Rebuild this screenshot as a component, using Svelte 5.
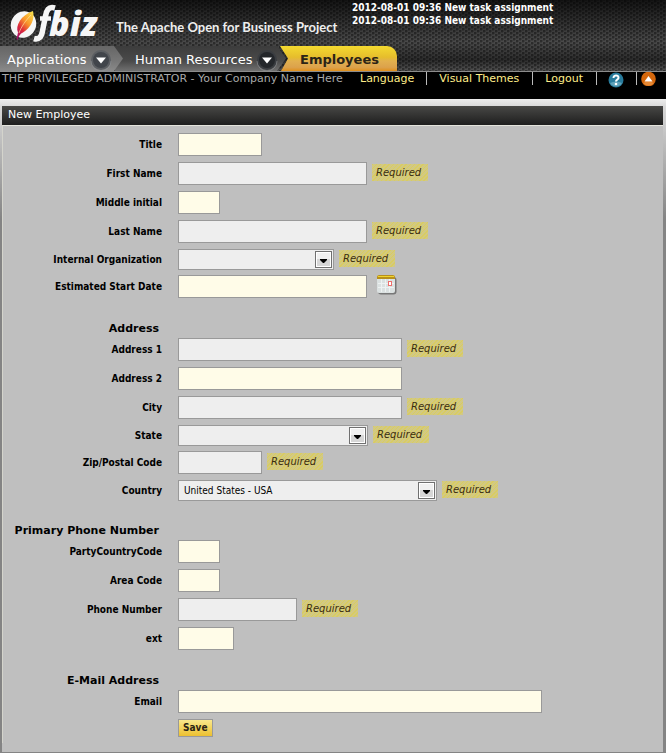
<script>
  const sections = [
    {
      title: '',
      fields: [
        { id: 'title', label: 'Title', width: 84 },
        { id: 'firstName', label: 'First Name', width: 189, required: true },
        { id: 'middleName', label: 'Middle initial', width: 42 },
        { id: 'lastName', label: 'Last Name', width: 189, required: true },
        { id: 'organization', label: 'Internal Organization', width: 156, required: true, options: [''] },
        { id: 'startDate', label: 'Estimated Start Date', width: 189, calendar: true }
      ]
    },
    {
      title: 'Address',
      fields: [
        { id: 'address1', label: 'Address 1', width: 224, required: true },
        { id: 'address2', label: 'Address 2', width: 224 },
        { id: 'city', label: 'City', width: 224, required: true },
        { id: 'state', label: 'State', width: 190, required: true, options: [''] },
        { id: 'postalCode', label: 'Zip/Postal Code', width: 84, required: true },
        { id: 'country', label: 'Country', width: 259, required: true, options: ['United States - USA'] }
      ]
    },
    {
      title: 'Primary Phone Number',
      fields: [
        { id: 'countryCode', label: 'PartyCountryCode', width: 42 },
        { id: 'areaCode', label: 'Area Code', width: 42 },
        { id: 'phone', label: 'Phone Number', width: 119, required: true },
        { id: 'ext', label: 'ext', width: 56 }
      ]
    },
    {
      title: 'E-Mail Address',
      fields: [{ id: 'email', label: 'Email', width: 364 }]
    }
  ];
  const messages = ['2012-08-01 09:36 New task assignment', '2012-08-01 09:36 New task assignment'];
</script>

{#snippet arrowDisc(rim, face)}
  <svg class="disc" width="22" height="22" viewBox="0 0 22 22" aria-hidden="true">
    <circle cx="11" cy="11" r="10" fill={rim} />
    <path d="M1 12a10 10 0 0 0 20 0" fill="none" stroke="#909397" stroke-width="1" opacity=".6" />
    <circle cx="11" cy="11" r="8" fill={face} />
    <path d="M6 8.500h10L11 14.500z" fill="#fff" />
  </svg>
{/snippet}

<div class="page">
  <header>
    <div class="masthead">
      <svg class="logo" width="94" height="43" viewBox="0 0 94 43" role="img" aria-label="Ofbiz">
        <defs>
          <linearGradient id="feather" x1="0.9" y1="0" x2="0.2" y2="1">
            <stop offset="0" stop-color="#f9e04c" />
            <stop offset=".4" stop-color="#f9962a" />
            <stop offset=".7" stop-color="#de2a3a" />
            <stop offset="1" stop-color="#a3106a" />
          </linearGradient>
        </defs>
        <ellipse cx="17.500" cy="21.500" rx="12.500" ry="13.500" transform="rotate(30 17.500 21.500)" fill="#f6f6f6" />
        <path d="M27 8C29 16 25 25 17 29.500Q13 31 11.500 37L10.500 36 12 29.500C9 23 15 12 27 8z" fill="url(#feather)" />
        <path d="M25 12C20 17 15 24 13 30" stroke="#ffe2a0" stroke-width=".7" fill="none" />
        <path d="M49 5C42 3 40.500 8 39.500 13L36.500 28C35.500 34 33 37 28 35.500" stroke="#f6f6f6" stroke-width="5.500" fill="none" />
        <path d="M34 15.500H45" stroke="#f6f6f6" stroke-width="4.500" />
        <text x="43" y="33" class="wordmark">biz</text>
      </svg>
      <span class="tagline">The Apache Open for Business Project</span>
      <div class="messages">
        {#each messages as message}
          <div>{message}</div>
        {/each}
      </div>
    </div>

    <nav class="tabs">
      <a class="tab first" href="#applications">Applications {@render arrowDisc('#5c5f63', '#41454b')}</a>
      <a class="tab second" href="#hr">Human Resources {@render arrowDisc('#3a3d41', '#24272b')}</a>
      <a class="tab current" href="#employees">Employees</a>
    </nav>

    <div class="userbar">
      <span class="who">THE PRIVILEGED ADMINISTRATOR - Your Company Name Here</span>
      <a href="#language">Language</a>
      <a href="#themes">Visual Themes</a>
      <a href="#logout">Logout</a>
      <a class="help" href="#help" aria-label="Help">
        <svg width="16" height="16" viewBox="0 0 16 16" aria-hidden="true">
          <circle cx="8" cy="8" r="7.500" fill="#287b9c" />
          <path d="M2 11a7 7 0 0 0 12 0Q8 8 2 11" fill="#77b3c8" opacity=".7" />
          <path d="M5.500 6C5.500 2.500 10.800 2.800 10.500 5.800C10.300 7.500 8 7.500 8 9.500" fill="none" stroke="#fff" stroke-width="2" />
          <circle cx="8" cy="12" r="1.300" fill="#fff" />
        </svg>
      </a>
      <a class="up" href="#top" aria-label="Collapse header">
        <svg width="15" height="14" viewBox="0 0 15 14" aria-hidden="true">
          <circle cx="7.500" cy="7" r="7.300" fill="#d4670c" />
          <path d="M2 11a7 7 0 0 0 11 0Q7.500 8 2 11" fill="#f3a254" opacity=".6" />
          <path d="M3.500 9.500 7.500 4l4 5.500z" fill="#fff" />
        </svg>
      </a>
    </div>
  </header>

  <main>
    <section class="panel">
      <h1>New Employee</h1>
      <form onsubmit={(event) => event.preventDefault()}>
        {#each sections as section}
          {#if section.title}<h2>{section.title}</h2>{/if}
          {#each section.fields as field}
            <div class="row" class:short={field.options}>
              <label for={field.id}>{field.label}</label>
              {#if field.options}
                <span class="select" style:width="{field.width}px">
                  <select id={field.id}>
                    {#each field.options as option}<option>{option}</option>{/each}
                  </select>
                  <svg width="17" height="17" viewBox="0 0 17 17" aria-hidden="true">
                    <rect x=".5" y=".5" width="16" height="16" fill="#fff" stroke="#707070" />
                    <rect x="2" y="2" width="13" height="6" fill="#f0f0f0" />
                    <rect x="2" y="8" width="13" height="7" fill="#d6d6d6" />
                    <path d="M5 8h7v1l-3 3h-1l-3-3z" fill="#000" />
                  </svg>
                </span>
              {:else}
                <input id={field.id} type="text" class:required={field.required} style:width="{field.width}px" />
              {/if}
              {#if field.required}<em>Required</em>{/if}
              {#if field.calendar}
                <button class="calendar" type="button" aria-label="Choose a date">
                  <svg width="20" height="20" viewBox="0 0 20 20" aria-hidden="true">
                    <rect x="1" y="2" width="18.500" height="17.500" rx="3" fill="#777" />
                    <rect x="0" y="0" width="18" height="18" rx="2" fill="#dbe1e1" />
                    <path d="M4.500 4v13M8.500 4v13M12.500 4v13M1 8.500h16M1 12.500h16" stroke="#eef2f2" />
                    <path d="M0 4V2a2 2 0 0 1 2-2h14a2 2 0 0 1 2 2v2z" fill="#b8901c" />
                    <path d="M1 2V1h16v1z" fill="#f0d52c" />
                    <rect x="11.500" y="6.500" width="3" height="4" fill="#fff" stroke="#ee6f6c" />
                  </svg>
                </button>
              {/if}
            </div>
          {/each}
        {/each}
        <div class="actions"><button class="save" type="submit">Save</button></div>
      </form>
    </section>
  </main>
</div>

<style>
  :global(body) {
    margin: 0;
    background: #848484;
  }
  .page {
    font-family: 'DejaVu Sans', Verdana, sans-serif;
    color: #000;
  }
  header {
    background:
      radial-gradient(circle at 1px 1px, rgba(0, 0, 0, 0.4) 1px, transparent 2px) 0 0 / 6px 4px,
      radial-gradient(circle at 1px 1px, rgba(0, 0, 0, 0.4) 1px, transparent 2px) 3px 2px / 6px 4px,
      linear-gradient(#141414 0, #4a4a4a 42px, #2c2c2c 60px, #555 72px);
  }
  .masthead {
    display: flex;
    align-items: flex-start;
    height: 46px;
    padding-left: 6px;
  }
  .logo {
    flex: none;
    margin-top: 3px;
    overflow: visible;
  }
  .wordmark {
    font: italic 800 34px 'Open Sans', sans-serif;
    fill: #f6f6f6;
  }
  .tagline {
    flex: none;
    width: 252px;
    padding: 17px 0 0 16px;
    box-sizing: border-box;
    font: bold 13px/20px Lato, 'Open Sans', sans-serif;
    color: #eee;
    white-space: nowrap;
  }
  .messages {
    padding-top: 1px;
    font: bold 10px/13px 'DejaVu Sans Condensed', 'DejaVu Sans', sans-serif;
    color: #fff;
    white-space: nowrap;
  }
  .tabs {
    display: flex;
    height: 25px;
    border-bottom: 1px solid #8c8c8c;
  }
  .tab {
    display: flex;
    align-items: center;
    justify-content: space-between;
    box-sizing: border-box;
    padding-top: 2px;
    font-size: 13px;
    color: #fff;
    text-decoration: none;
    white-space: nowrap;
  }
  .first {
    width: 123px;
    padding-right: 11px;
    padding-left: 7px;
    background: linear-gradient(#666, #777 60%, #8a8a8a);
    clip-path: polygon(0 0, 114px 0, 100% 50%, 114px 100%, 0 100%);
    z-index: 1;
  }
  .second {
    width: 171px;
    margin-left: -8px;
    padding-right: 8px;
    padding-left: 20px;
    background: linear-gradient(#3c3c3c, #4a4a4a 60%, #707070);
    clip-path: polygon(0 0, 162px 0, 100% 50%, 162px 100%, 0 100%);
  }
  .current {
    width: 117px;
    margin-left: -6px;
    padding-left: 20px;
    border-radius: 0 10px 0 0;
    background: linear-gradient(#f4da30, #e6bd2c 45%, #e2b04e 60%, #dca24c 85%, #e0901c);
    clip-path: polygon(0 0, 100% 0, 100% 100%, 1px 100%, 8px 50%);
    font-weight: bold;
    color: #2b2416;
  }
  .disc {
    flex: none;
  }
  .userbar {
    display: flex;
    align-items: flex-start;
    height: 27px;
    background: #000;
    font-size: 11px;
    line-height: 13px;
    white-space: nowrap;
  }
  .who {
    flex: none;
    width: 346px;
    padding-left: 2px;
    color: #a8a8a8;
  }
  .userbar a {
    padding: 0 12px;
    border-right: 1px solid #bbb;
    color: #ffee8a;
    text-decoration: none;
  }
  .userbar a:nth-of-type(n + 2) {
    padding-right: 13px;
  }
  .userbar a svg {
    display: block;
  }
  .userbar a.help {
    height: 13px;
    padding: 0 12px 0 11px;
  }
  .userbar a.up {
    padding: 0 4px;
    border: 0;
  }
  main {
    padding: 7px 3px 1px 2px;
    background: linear-gradient(#ececec 0, #d8d8d8 8px, #848484 120px);
  }
  .panel {
    padding-bottom: 9px;
    background: #bfbfbf;
  }
  h1 {
    height: 19px;
    margin: 0;
    padding-left: 6px;
    background: linear-gradient(#484846, #1e1e1e);
    font-size: 11px;
    font-weight: normal;
    line-height: 17px;
    color: #fff;
  }
  form {
    padding: 7px 0 6px;
    border-top: 1px solid #e4e4dc;
    border-left: 1px solid #d4d4cc;
  }
  h2 {
    width: 156px;
    height: 18px;
    margin: 0;
    padding-top: 16px;
    font-size: 11px;
    line-height: 18px;
    text-align: right;
    white-space: nowrap;
  }
  .row {
    display: flex;
    align-items: flex-start;
    height: 29px;
  }
  .row.short {
    height: 26px;
  }
  label {
    flex: none;
    width: 159px;
    margin-right: 16px;
    font: bold 10px/24px 'DejaVu Sans Condensed', 'DejaVu Sans', sans-serif;
    text-align: right;
  }
  .short label {
    line-height: 21px;
  }
  input,
  select {
    box-sizing: border-box;
    height: 23px;
    margin: 0;
    padding: 0 5px;
    border: 1px solid #999;
    border-radius: 0;
    background: #fffce8;
    font: 10px 'DejaVu Sans Condensed', 'DejaVu Sans', sans-serif;
    color: #000;
  }
  input.required,
  select {
    background: #eee;
  }
  .select {
    position: relative;
  }
  select {
    display: block;
    width: 100%;
    height: 21px;
    appearance: none;
  }
  .select svg {
    position: absolute;
    top: 2px;
    right: 2px;
    pointer-events: none;
  }
  em {
    box-sizing: border-box;
    width: 56px;
    height: 17px;
    margin: 2px 0 0 5px;
    padding-left: 4px;
    background: repeating-linear-gradient(135deg, #d9cc62 0 1px, #d2c983 1px 3px);
    font: italic 10px/17px 'DejaVu Sans', sans-serif;
    color: #3a2c10;
  }
  .short em {
    margin-top: 1px;
  }
  .calendar {
    margin-left: 10px;
    padding: 0;
    border: 0;
    background: none;
  }
  .calendar svg {
    display: block;
  }
  .actions {
    padding-left: 175px;
  }
  .save {
    display: block;
    height: 18px;
    padding: 0 4px;
    border: 1px solid #999;
    background: linear-gradient(#f9e88c, #ecc030);
    font: bold 10px/14px 'DejaVu Sans Condensed', 'DejaVu Sans', sans-serif;
    color: #2b2416;
  }
</style>
